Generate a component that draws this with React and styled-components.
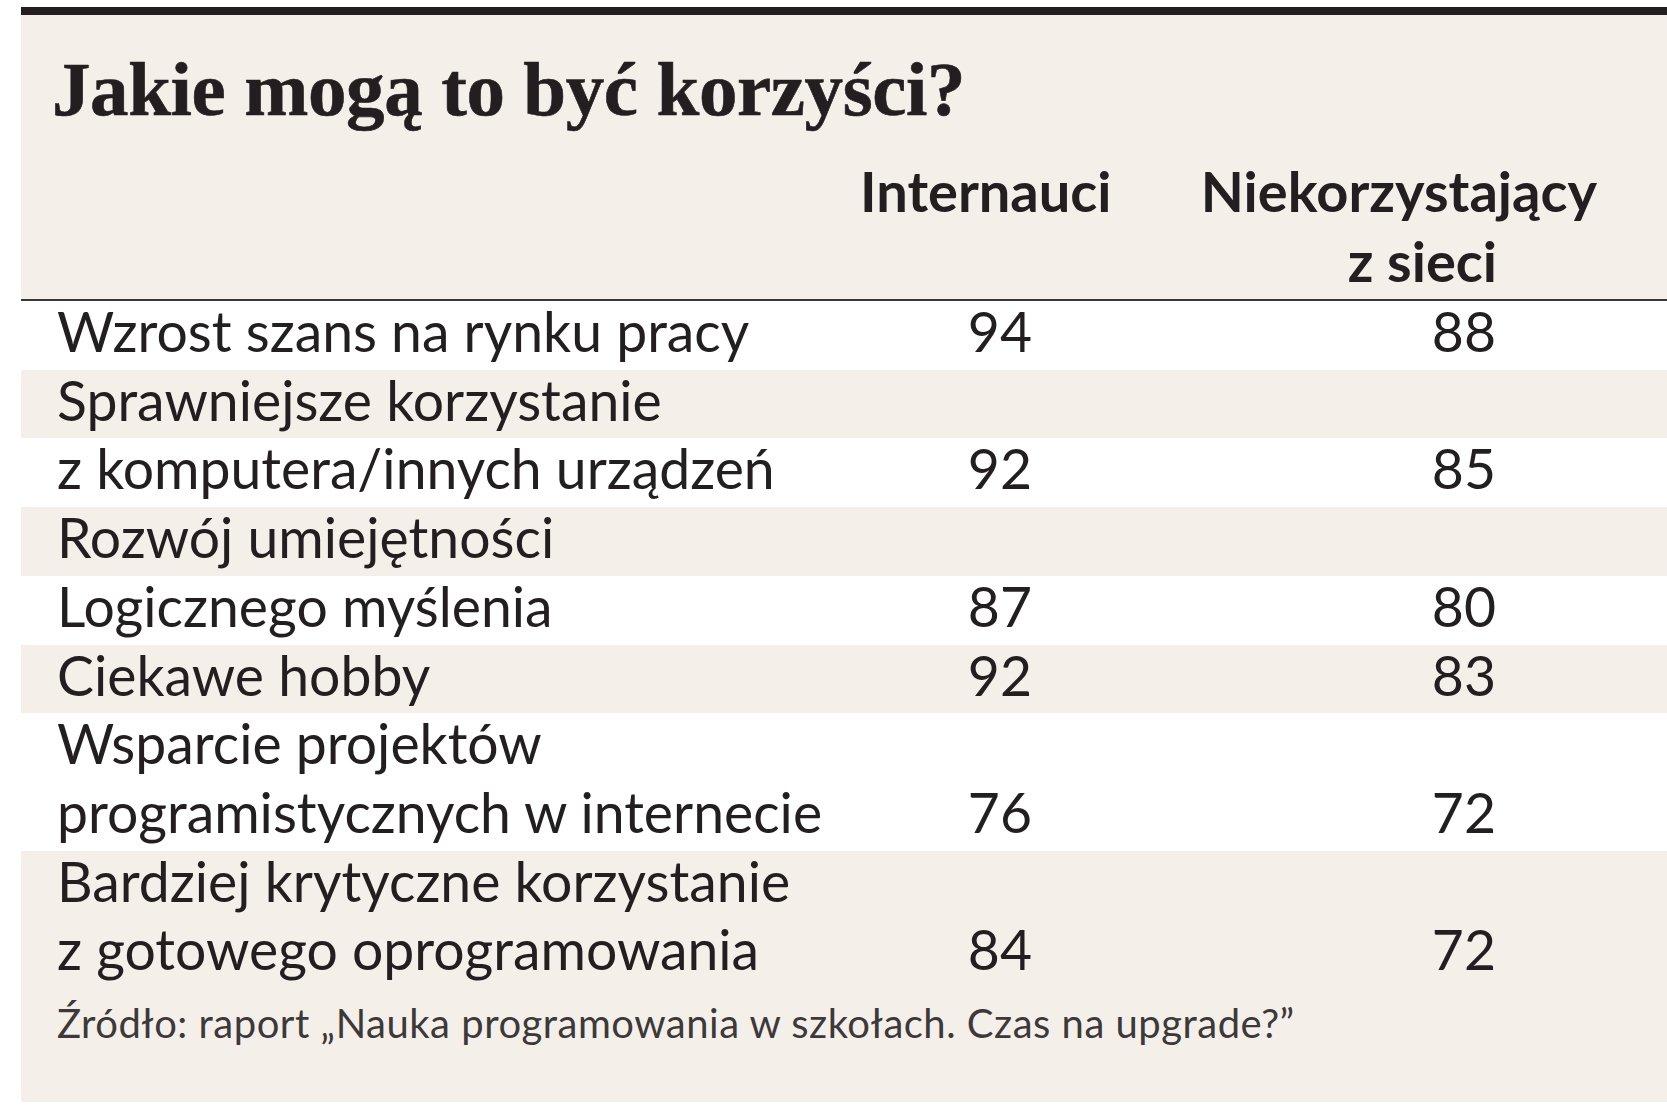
import styled, { createGlobalStyle } from "styled-components";

const GlobalStyle = createGlobalStyle`
  body {
    margin: 0;
    background: #ffffff;
    font-family: Lato, "Noto Sans", sans-serif;
    color: #231f20;
  }
`;

const Card = styled.section`
  margin: 7px 0 0 21px;
  border-top: 8px solid #231f20;
  background: #f4f0e9;
  height: 1087px;
`;

const Title = styled.h1`
  margin: 35.5px 0 0;
  padding-left: 31px;
  font-family: "Liberation Serif", "DejaVu Serif", serif;
  font-weight: 700;
  font-size: 77px;
  line-height: 77px;
  letter-spacing: -0.4px;
  -webkit-text-stroke: 0.6px #231f20;
`;

const Head = styled.div`
  display: grid;
  grid-template-columns: 1fr 250px 390px;
  column-gap: 97px;
  margin-top: 28.5px;
  padding: 0 70px 3px 36px;
  border-bottom: 2px solid #3b3738;
  font-weight: 700;
  font-size: 56px;
  line-height: 70px;
`;

const HeadCell = styled.div`
  display: flex;
  flex-direction: column;
  align-items: ${(p) => (p.$right ? "flex-end" : "flex-start")};
  white-space: nowrap;
`;

const HeadLine = styled.span`
  margin-right: ${(p) => p.$shift || 0}px;
`;

const Row = styled.div`
  display: grid;
  grid-template-columns: 1fr 150px 464px;
  padding: 0 171px 0 36px;
  background: ${(p) => (p.$shade ? "#f4f0e9" : "#ffffff")};
  font-size: 55.3px;
  line-height: 68.7px;
`;

const Label = styled.div`
  margin: -4px 0 4px;
  white-space: nowrap;
`;

const Value = styled.div`
  align-self: end;
  margin: -4px 0 4px;
  text-align: right;
`;

const Source = styled.p`
  margin: 11.5px 0 0;
  padding-left: 36px;
  font-size: 40px;
  line-height: 46px;
  letter-spacing: 0.5px;
  color: #3d393a;
  white-space: nowrap;
`;

const rows = [
  { lines: ["Wzrost szans na rynku pracy"], a: 94, b: 88 },
  { shade: true, lines: ["Sprawniejsze korzystanie"] },
  { lines: ["z komputera/innych urządzeń"], a: 92, b: 85 },
  { shade: true, lines: ["Rozwój umiejętności"] },
  { lines: ["Logicznego myślenia"], a: 87, b: 80 },
  { shade: true, lines: ["Ciekawe hobby"], a: 92, b: 83 },
  { lines: ["Wsparcie projektów", "programistycznych w internecie"], a: 76, b: 72 },
  { shade: true, lines: ["Bardziej krytyczne korzystanie", "z gotowego oprogramowania"], a: 84, b: 72 },
];

export default function App() {
  return (
    <>
      <GlobalStyle />
      <Card>
        <Title>Jakie mogą to być korzyści?</Title>
        <Head>
          <div />
          <HeadCell>
            <HeadLine>Internauci</HeadLine>
          </HeadCell>
          <HeadCell $right>
            <HeadLine>Niekorzystający</HeadLine>
            <HeadLine $shift={100}>z sieci</HeadLine>
          </HeadCell>
        </Head>
        {rows.map((r, i) => (
          <Row key={i} $shade={r.shade}>
            <Label>
              {r.lines.map((l, j) => (
                <div key={j}>{l}</div>
              ))}
            </Label>
            <Value>{r.a}</Value>
            <Value>{r.b}</Value>
          </Row>
        ))}
        <Source>Źródło: raport „Nauka programowania w szkołach. Czas na upgrade?”</Source>
      </Card>
    </>
  );
}
